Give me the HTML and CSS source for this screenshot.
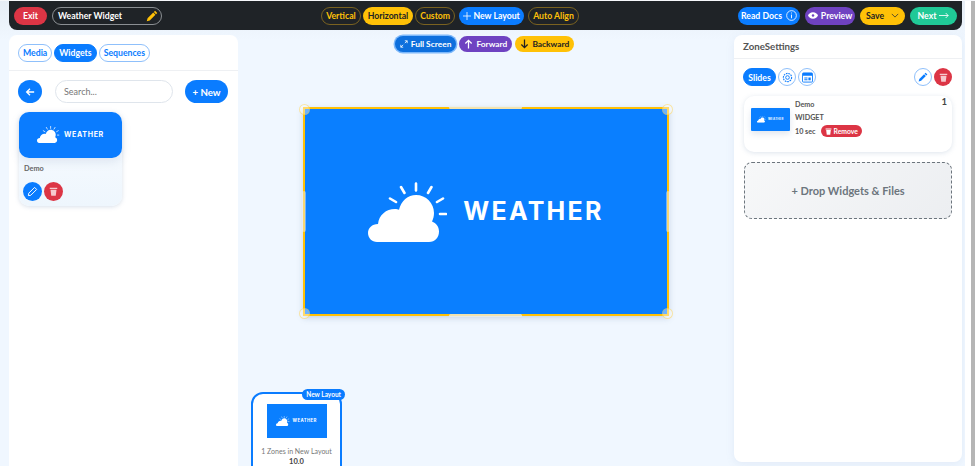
FILE: index.html
```html
<!DOCTYPE html>
<html lang="en">
<head>
    <meta charset="UTF-8">
    <meta name="viewport" content="width=device-width, initial-scale=1.0">
    <title>Layout Editor</title>
    <link rel="stylesheet" href="styles.css">
</head>
<body>

<svg class="defs" width="0" height="0">
    <symbol id="cloud" viewBox="0 0 79 60">
        <path stroke="#fff" stroke-width="2.600" stroke-linecap="round" d="M48 1.500v7M33 5l3.500 6M22 16.500l6 3.500M63.500 5 60 11M75 16.500 69 20M72 32h6"/>
        <path fill="#fff" d="M9 60C4 60 0 56 0 51c0-5 4-9 10-9 1-9 8-15 17-15 1.500 0 3 .3 4 .8C33 19 40 13 48 13c10 0 18 8 18 18 0 3-.7 6-2 8.500 4 1.500 7 5 7 10 0 6-4 10.500-10 10.500z"/>
    </symbol>
</svg>

<div class="page">
    <!-- Top bar -->
    <header class="topbar">
        <div class="topbar-left">
            <button class="btn btn-red">Exit</button>
            <div class="name-field">
                <span>Weather Widget</span>
                <svg width="12" height="12" viewBox="0 0 16 16"><path fill="#ffc107" d="M12.100 1 15 3.900 13.400 5.500 10.500 2.600zM9.700 3.400 12.600 6.300 5 13.900 1 15 2.100 11z"/></svg>
            </div>
        </div>
        <div class="topbar-mid">
            <div class="group">
                <button class="btn btn-line">Vertical</button>
                <button class="btn btn-yellow">Horizontal</button>
                <button class="btn btn-line">Custom</button>
            </div>
            <button class="btn btn-blue btn-layout">
                <svg width="8" height="8" viewBox="0 0 10 10"><path stroke="#fff" stroke-width="1" d="M5 0v10M0 5h10"/></svg>
                New Layout
            </button>
            <button class="btn btn-line">Auto Align</button>
        </div>
        <div class="topbar-right">
            <button class="btn btn-blue btn-docs">
                Read Docs
                <svg width="11" height="11" viewBox="0 0 12 12"><circle cx="6" cy="6" r="5.300" fill="none" stroke="#fff" stroke-width=".9"/><path stroke="#fff" d="M6 5v4M6 2.800v1"/></svg>
            </button>
            <button class="btn btn-purple btn-preview">
                <svg width="10" height="7" viewBox="0 0 12 8"><path fill="#fff" d="M6 0c3 0 5 2 6 4-1 2-3 4-6 4S1 6 0 4c1-2 3-4 6-4z"/><circle cx="6" cy="4" r="1.500" fill="#6f42c1"/></svg>
                Preview
            </button>
            <button class="btn btn-yellow btn-save">
                Save
                <svg width="8" height="5" viewBox="0 0 10 6"><path fill="none" stroke="#333" d="M1 1l4 4 4-4"/></svg>
            </button>
            <button class="btn btn-green">
                Next
                <svg width="10" height="7" viewBox="0 0 12 8"><path fill="none" stroke="#fff" d="M0 4h11M8 1l3 3-3 3"/></svg>
            </button>
        </div>
    </header>

    <main class="editor">
        <!-- Left panel -->
        <aside class="panel panel-left">
            <div class="tabs">
                <button class="btn btn-tab">Media</button>
                <button class="btn btn-tab active">Widgets</button>
                <button class="btn btn-tab">Sequences</button>
            </div>
            <div class="search-row">
                <button class="round round-blue round-back">
                    <svg width="10" height="10" viewBox="0 0 12 12"><path fill="none" stroke="#fff" stroke-width="1.600" d="M11 6H2M6 2 2 6l4 4"/></svg>
                </button>
                <div class="search">Search...</div>
                <button class="btn btn-blue btn-new">+ New</button>
            </div>
            <div class="widget-card">
                <div class="widget-thumb">
                    <div class="logo logo-widget"><svg><use href="#cloud"/></svg><span>WEATHER</span></div>
                </div>
                <div class="widget-name">Demo</div>
                <div class="widget-actions">
                    <button class="round round-blue">
                        <svg width="11" height="11" viewBox="0 0 16 16"><path fill="none" stroke="#fff" stroke-width="1.400" d="M11 2l3 3-8.500 8.500L2 14l.5-3.500z"/></svg>
                    </button>
                    <button class="round round-red">
                        <svg width="9" height="9" viewBox="0 0 12 12"><path fill="#f6c9cd" d="M1 1h10v1.500H1zM2 3.500h8L9 11.500H3z"/></svg>
                    </button>
                </div>
            </div>
        </aside>

        <!-- Canvas -->
        <section class="canvas">
            <div class="zone-tools">
                <button class="btn btn-blue btn-full">
                    <svg width="8" height="8" viewBox="0 0 10 10"><path fill="none" stroke="#fff" d="M1 9l3-3M6 4l3-3M6 1h3v3M1 6v3h3"/></svg>
                    Full Screen
                </button>
                <button class="btn btn-purple">
                    <svg width="9" height="10" viewBox="0 0 10 10"><path fill="none" stroke="#fff" stroke-width="1.400" d="M5 10V1M1.500 4.500 5 1l3.500 3.500"/></svg>
                    Forward
                </button>
                <button class="btn btn-yellow">
                    <svg width="9" height="10" viewBox="0 0 10 10"><path fill="none" stroke="#222" stroke-width="1.400" d="M5 0v9M1.500 5.500 5 9l3.500-3.500"/></svg>
                    Backward
                </button>
            </div>
            <div class="zone">
                <div class="logo logo-zone"><svg><use href="#cloud"/></svg><span>WEATHER</span></div>
                <span class="dot dot-tl"></span>
                <span class="dot dot-tr"></span>
                <span class="dot dot-bl"></span>
                <span class="dot dot-br"></span>
                <span class="bar bar-top"></span>
                <span class="bar bar-bottom"></span>
                <span class="bar bar-left"></span>
                <span class="bar bar-right"></span>
            </div>
            <div class="layout-card">
                <span class="layout-badge">New Layout</span>
                <div class="layout-thumb">
                    <div class="logo logo-layout"><svg><use href="#cloud"/></svg><span>WEATHER</span></div>
                </div>
                <div class="layout-name">1 Zones in New Layout</div>
                <div class="layout-num">10.0</div>
            </div>
        </section>

        <!-- Right panel -->
        <aside class="panel panel-right">
            <h2 class="panel-title">ZoneSettings</h2>
            <div class="zone-tabs">
                <button class="btn btn-tab active btn-slides">Slides</button>
                <button class="round round-line">
                    <svg width="11" height="11" viewBox="0 0 12 12"><circle cx="6" cy="6" r="2" fill="none" stroke="#0a7cff"/><circle cx="6" cy="6" r="4.500" fill="none" stroke="#0a7cff" stroke-width="1.200" stroke-dasharray="1.800 .9"/></svg>
                </button>
                <button class="round round-line">
                    <svg width="11" height="11" viewBox="0 0 12 12"><rect x=".5" y="1" width="11" height="10" rx="1" fill="none" stroke="#0a7cff"/><path fill="#0a7cff" d="M1 1h10v3H1zM2.500 6H6v1H2.500zM2.500 8H6v1H2.500zM7 6h2.500v3H7z"/></svg>
                </button>
                <span class="spacer"></span>
                <button class="round round-line">
                    <svg width="10" height="10" viewBox="0 0 16 16"><path fill="#0a7cff" d="M12.100 1 15 3.900 13.400 5.500 10.500 2.600zM9.700 3.400 12.600 6.300 5 13.900 1 15 2.100 11z"/></svg>
                </button>
                <button class="round round-red">
                    <svg width="9" height="9" viewBox="0 0 12 12"><path fill="#f6c9cd" d="M1 1h10v1.500H1zM2 3.500h8L9 11.500H3z"/></svg>
                </button>
            </div>
            <div class="slide">
                <div class="slide-thumb">
                    <div class="logo logo-slide"><svg><use href="#cloud"/></svg><span>WEATHER</span></div>
                </div>
                <div class="slide-info">
                    <div class="slide-line">Demo</div>
                    <div class="slide-line">WIDGET</div>
                    <div class="slide-time">
                        <span>10 sec</span>
                        <button class="btn btn-remove">
                            <svg width="7" height="7" viewBox="0 0 12 12"><path fill="#fff" d="M1 1h10v1.500H1zM2 3.500h8L9 11.500H3z"/></svg>
                            Remove
                        </button>
                    </div>
                </div>
                <span class="slide-index">1</span>
            </div>
            <div class="drop">+ Drop Widgets &amp; Files</div>
        </aside>
    </main>
</div>

<div class="scrollbar"></div>

</body>
</html>
```

FILE: styles.css
```css
* {
    box-sizing: border-box;
}

html, body {
    height: 100%;
}

body {
    margin: 0;
    padding-left: 9px;
    border-top: 1px solid #f6f8fb;
    background: linear-gradient(#e6edf5, #f0f7ff 40px);
    font-family: Lato, "Noto Sans", sans-serif;
    font-size: 9px;
    color: #333;
    overflow: hidden;
    display: flex;
}

.defs {
    position: absolute;
}

.page {
    width: 953px;
    flex: none;
}

.scrollbar {
    width: 10px;
    margin-left: 3px;
    background: #b5b5b5;
    border-left: 6px solid #fff;
}

button {
    font-family: inherit;
    cursor: pointer;
}

/* Weather logo, everything in em so it scales from font-size */
.logo {
    display: flex;
    align-items: center;
    gap: .64em;
    font-family: Inter, sans-serif;
    font-weight: 700;
    letter-spacing: .09em;
    line-height: 1;
    color: #fff;
}

.logo svg {
    width: 3.160em;
    height: 2.400em;
}

.logo-zone { font-size: 25px; }
.logo-widget { font-size: 7.100px; }
.logo-layout { font-size: 4.300px; }
.logo-slide { font-size: 2.800px; }

/* Top bar */
.topbar {
    height: 29px;
    background: #1f2327;
    border-radius: 0 0 8px 8px;
    padding: 0 5px;
    display: flex;
    align-items: center;
    justify-content: space-between;
}

.topbar-left, .topbar-mid, .topbar-right, .group {
    display: flex;
    align-items: center;
}

.topbar-left { gap: 5px; }
.topbar-mid { gap: 4px; }
.group { gap: 2px; }
.topbar-right { gap: 5px; }

.btn {
    height: 18px;
    padding: 0 4px;
    border: 1px solid transparent;
    border-radius: 9px;
    font-size: 8.700px;
    font-weight: 700;
    white-space: nowrap;
    display: inline-flex;
    align-items: center;
    justify-content: center;
    gap: 3px;
}

.btn-red { background: #dc3545; color: #fff; width: 33px; }
.btn-blue { background: #0a7cff; color: #fff; }
.btn-purple { background: #6f42c1; color: #fff; }
.btn-yellow { background: #ffc107; color: #222; }
.btn-green { background: #20c997; color: #fff; width: 47px; }
.btn-line { background: none; border-color: #7a6220; color: #ffc107; }
.btn-layout { width: 65px; gap: 2px; padding: 0; }
.btn-docs { width: 62px; gap: 4px; padding: 0; }
.btn-preview { width: 50px; padding: 0; }
.btn-save { width: 45px; gap: 7px; }

.name-field {
    width: 110px;
    height: 18px;
    border: 1px solid #8b8f93;
    border-radius: 9px;
    padding: 0 3px 0 5px;
    color: #fff;
    font-size: 8.700px;
    font-weight: 700;
    display: flex;
    align-items: center;
    justify-content: space-between;
}

/* Main area */
.editor {
    height: 436px;
    margin-top: 5px;
    display: grid;
    grid-template-columns: 229px 1fr 228px;
}

.panel {
    background: #fff;
    border-radius: 8px 8px 0 0;
}

.panel-right {
    height: 427px;
    border-radius: 8px;
    box-shadow: 0 2px 8px rgba(120, 150, 190, .12);
}

.tabs {
    height: 36px;
    padding: 0 9px;
    border-bottom: 1px solid #eef0f3;
    display: flex;
    align-items: center;
    gap: 2px;
}

.btn-tab {
    background: #fff;
    color: #0a7cff;
    border-color: #8fc0fb;
}

.btn-tab.active {
    background: #0a7cff;
    border-color: #0a7cff;
    color: #fff;
}

.search-row {
    margin-top: 9px;
    padding: 0 10px 0 9px;
    display: flex;
    align-items: center;
}

.round {
    width: 18px;
    height: 18px;
    padding: 0;
    border: 1px solid transparent;
    border-radius: 50%;
    display: inline-flex;
    align-items: center;
    justify-content: center;
    flex: none;
}

.round-back {
    width: 24px;
    height: 23px;
}

.round-blue { background: #0a7cff; }
.round-red { background: #dc3545; }
.round-line { background: #fff; border-color: #8fc0fb; }

.search {
    width: 118px;
    height: 23px;
    margin: 0 12px 0 13px;
    border: 1px solid #dfe5ec;
    border-radius: 12px;
    padding: 0 8px;
    font-size: 9px;
    color: #777;
    display: flex;
    align-items: center;
}

.btn-new {
    width: 43px;
    height: 23px;
    border-radius: 12px;
    font-size: 9.700px;
    padding: 0;
}

.widget-card {
    width: 103px;
    height: 94px;
    margin: 9px 0 0 10px;
    border-radius: 10px;
    background: linear-gradient(#fafcff, #eef6fd);
    box-shadow: 0 1px 4px rgba(100, 130, 170, .25);
}

.widget-thumb {
    height: 46px;
    background: #0a7cff;
    border-radius: 10px;
    display: flex;
    align-items: center;
    justify-content: center;
    box-shadow: 0 4px 10px rgba(100, 130, 170, .15);
}

.widget-name {
    margin: 6px 0 0 5px;
    font-size: 7.300px;
    font-weight: 700;
    color: #666;
}

.widget-actions {
    margin: 9px 0 0 4px;
    display: flex;
    gap: 2px;
}

.widget-actions .round {
    width: 19px;
    height: 19px;
}

/* Canvas */
.canvas {
    display: flex;
    flex-direction: column;
    align-items: flex-start;
    min-width: 0;
}

.zone-tools {
    align-self: center;
    display: flex;
    gap: 3px;
    margin: 1px 3px 0 0;
}

.zone-tools .btn {
    height: 16px;
    padding: 0 4px;
    font-size: 8.400px;
}

.btn-full {
    background: #0d6fdd;
    box-shadow: 0 0 0 1.500px #7db8fa;
}

.zone {
    position: relative;
    width: 366px;
    height: 209px;
    margin: 55px 0 0 65px;
    background: #0a7fff;
    border: 2px solid #ffc107;
    box-shadow: 0 2px 6px rgba(100, 130, 170, .3);
    display: flex;
    align-items: center;
    justify-content: center;
    flex: none;
}

.dot {
    position: absolute;
    width: 11px;
    height: 11px;
    border-radius: 50%;
    background: rgba(255, 255, 255, .4);
    border: 1px solid rgba(255, 193, 7, .35);
}

.dot-tl { top: -5px; left: -6px; }
.dot-tr { top: -5px; right: -6px; }
.dot-bl { bottom: -5px; left: -6px; }
.dot-br { bottom: -5px; right: -6px; }

.bar {
    position: absolute;
    background: rgba(238, 238, 232, .75);
    border-radius: 2px;
}

.bar-top { top: -3px; left: 144px; width: 73px; height: 3px; }
.bar-bottom { bottom: -3px; left: 144px; width: 73px; height: 3px; }
.bar-left { left: -3px; top: 82px; width: 4px; height: 41px; background: rgba(240, 244, 250, .45); }
.bar-right { right: -3px; top: 82px; width: 4px; height: 41px; background: rgba(240, 244, 250, .45); }

.layout-card {
    position: relative;
    width: 91px;
    height: 90px;
    margin: 76px 0 0 13px;
    padding: 10px 0 0;
    background: #fff;
    border: 2px solid #0a7cff;
    border-radius: 12px;
    text-align: center;
    flex: none;
}

.layout-badge {
    position: absolute;
    top: -5px;
    right: -5px;
    height: 11px;
    padding: 0 4px;
    background: #0a7cff;
    color: #fff;
    border-radius: 6px;
    font-size: 6.500px;
    font-weight: 700;
    line-height: 11px;
}

.layout-thumb {
    width: 60px;
    height: 34px;
    margin: 0 auto;
    background: #0a7fff;
    display: flex;
    align-items: center;
    justify-content: center;
}

.layout-name {
    margin-top: 9px;
    font-size: 7px;
    color: #777;
}

.layout-num {
    margin-top: 2px;
    font-size: 7.500px;
    font-weight: 700;
    color: #444;
}

/* Right panel */
.panel-title {
    height: 24px;
    margin: 0;
    padding: 5px 9px 0;
    border-bottom: 1px solid #eef0f3;
    font-size: 9.700px;
    font-weight: 700;
    color: #555;
}

.zone-tabs {
    margin-top: 9px;
    padding: 0 10px 0 9px;
    display: flex;
    align-items: center;
    gap: 2px;
}

.btn-slides {
    width: 33px;
}

.spacer {
    flex: 1;
}

.slide {
    position: relative;
    height: 56px;
    margin: 10px 10px 0;
    padding: 2px 7px;
    background: #fff;
    border-radius: 10px;
    box-shadow: 0 1px 5px rgba(100, 130, 170, .22);
    display: flex;
    gap: 5px;
}

.slide-thumb {
    width: 39px;
    height: 23px;
    margin-top: 10px;
    background: #0a7fff;
    border-radius: 1px;
    display: flex;
    align-items: center;
    justify-content: center;
    box-shadow: 0 3px 6px rgba(100, 130, 170, .2);
}

.slide-info {
    font-size: 7.200px;
    color: #555;
    font-weight: 700;
}

.slide-line {
    line-height: 13px;
}

.slide-time {
    height: 14px;
    display: flex;
    align-items: center;
    gap: 5px;
}

.btn-remove {
    height: 12px;
    padding: 0 3px;
    background: #dc3545;
    color: #fff;
    font-size: 6.800px;
    gap: 2px;
}

.slide-index {
    position: absolute;
    top: 0;
    right: 5px;
    font-size: 9.500px;
    font-weight: 700;
    color: #444;
}

.drop {
    height: 57px;
    margin: 10px 10px 0;
    border: 1.500px dashed #6c757d;
    border-radius: 8px;
    background: linear-gradient(135deg, #f7f8f9, #eceef1);
    color: #6c757d;
    font-size: 11px;
    font-weight: 700;
    display: flex;
    align-items: center;
    justify-content: center;
}
```
